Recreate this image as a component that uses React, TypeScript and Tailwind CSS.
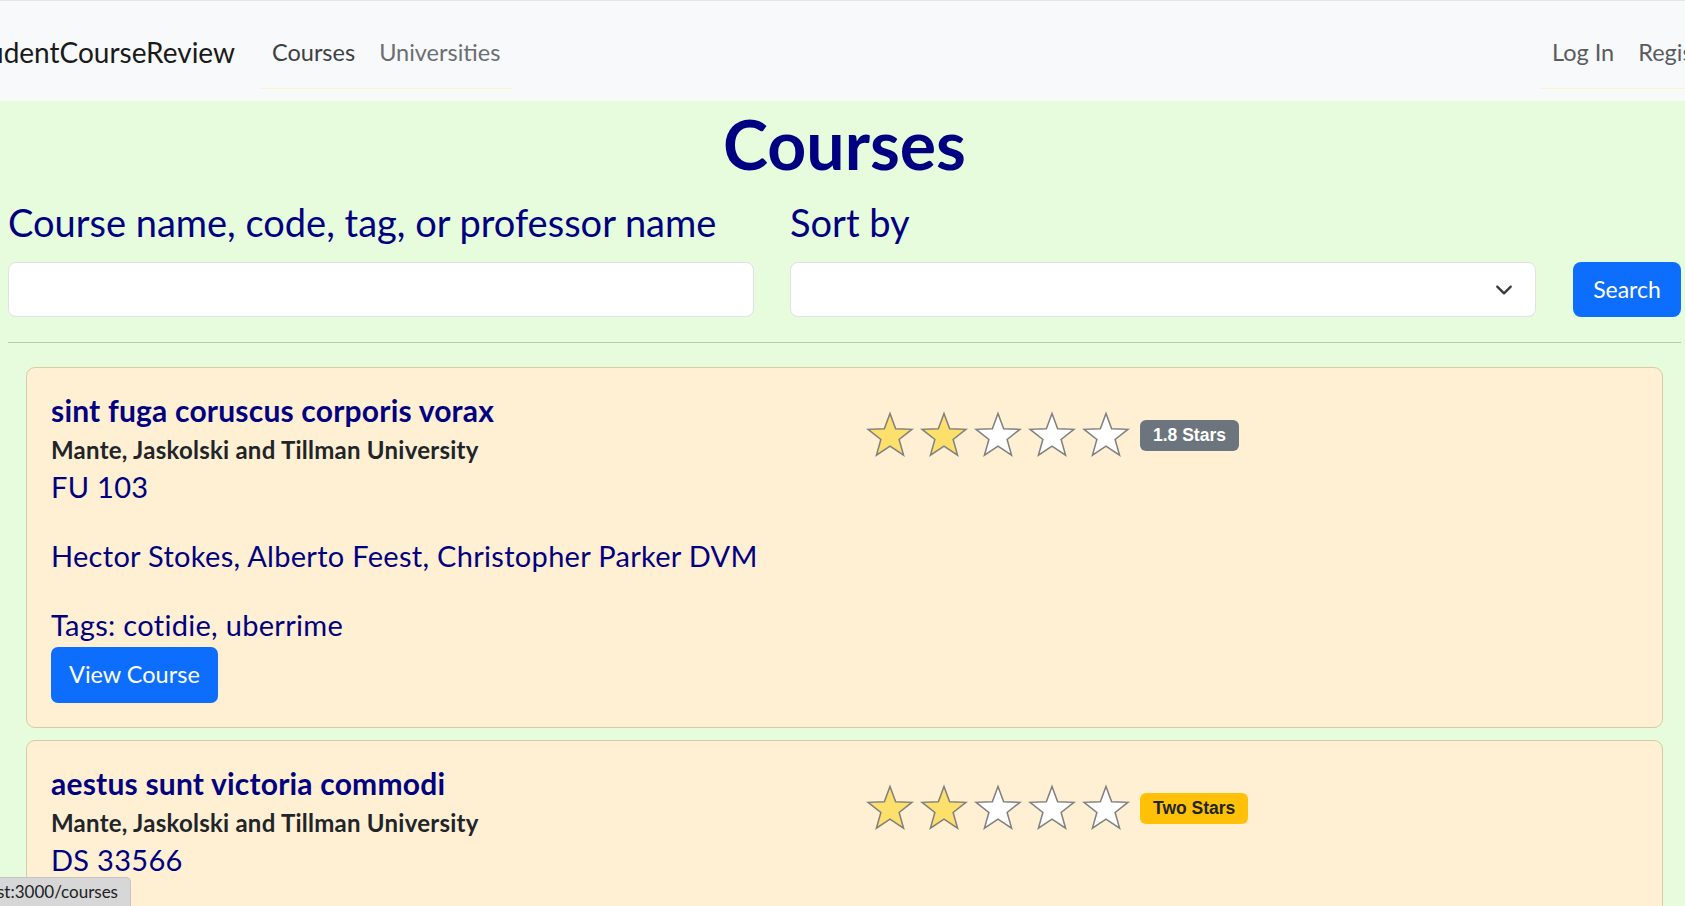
import React from "react";

type Course = {
  title: string;
  uni: string;
  code: string;
  profs: string;
  tags: string;
  filled: number;
  badge: string;
  badgeClass: string;
};

const courses: Course[] = [
  {
    title: "sint fuga coruscus corporis vorax",
    uni: "Mante, Jaskolski and Tillman University",
    code: "FU 103",
    profs: "Hector Stokes, Alberto Feest, Christopher Parker DVM",
    tags: "cotidie, uberrime",
    filled: 2,
    badge: "1.8 Stars",
    badgeClass: "bg-[#6c757d] text-white",
  },
  {
    title: "aestus sunt victoria commodi",
    uni: "Mante, Jaskolski and Tillman University",
    code: "DS 33566",
    profs: "Ms. Laura Kuhn, Wilbert Hessel",
    tags: "adeo, velut",
    filled: 2,
    badge: "Two Stars",
    badgeClass: "bg-[#ffc107] text-[#212529]",
  },
];

function Star({ filled }: { filled: boolean }) {
  return (
    <svg width="48" height="49" viewBox="0 0 50 50" className="shrink-0">
      <polygon
        points="25,2 30.88,17.91 47.83,18.58 34.51,29.09 39.11,45.42 25,36 10.89,45.42 15.49,29.09 2.17,18.58 19.12,17.91"
        fill={filled ? "#fde06b" : "#ffffff"}
        stroke="#808080"
        strokeWidth="1.6"
        strokeLinejoin="miter"
      />
    </svg>
  );
}

function CourseCard({ c }: { c: Course }) {
  return (
    <div className="mx-[18px] mb-[12px] rounded-[9px] border border-[#d8caa6] bg-[#fff0d4] px-[24px] pt-[26px] pb-[24px]">
      <div className="flex">
        {/* left side */}
        <div className="w-[815px] shrink-0">
          <div className="text-[30px] leading-[32px] font-bold tracking-[0.2px] text-[#000080]">{c.title}</div>
          <div className="pt-[2px] text-[24px] leading-[43px] font-bold tracking-[0.25px] text-[#212529]">{c.uni}</div>
          <div className="-mt-[1px] text-[29px] leading-[34px] tracking-[0.3px] text-[#000080]">{c.code}</div>
          <div className="mt-[35px] text-[29px] leading-[34px] tracking-[0.3px] text-[#000080]">{c.profs}</div>
          <div className="mt-[35px] text-[29px] leading-[34px] tracking-[0.3px] text-[#000080]">Tags: {c.tags}</div>
          <button className="mt-[5px] h-[56px] rounded-[7px] bg-[#0d6efd] px-[18px] text-[23.5px] text-white">
            View Course
          </button>
        </div>

        {/* rating */}
        <div className="mt-[17px] flex h-[49px] items-center">
          <div className="flex gap-[6px]">
            {[0, 1, 2, 3, 4].map((i) => (
              <Star key={i} filled={i < c.filled} />
            ))}
          </div>
          <span
            className={
              "ml-[10px] rounded-[6px] px-[13px] py-[5px] font-['Liberation_Sans',Arial,sans-serif] text-[17.5px] font-bold leading-[21px] " +
              c.badgeClass
            }
          >
            {c.badge}
          </span>
        </div>
      </div>
    </div>
  );
}

export default function App() {
  return (
    <div className="relative h-[906px] overflow-hidden bg-[#e6fcdc] font-['Lato',sans-serif]">
      {/* NAVBAR */}
      <nav className="flex h-[101px] items-start border-t border-[#e3e5e8] bg-[#f8f9fa]">
        <div className="mt-[31px] flex w-[235px] shrink-0 justify-end overflow-hidden whitespace-nowrap text-[28px] leading-[40px] text-[#1a1a1a]">
          StudentCourseReview
        </div>
        <ul className="ml-[25px] mt-[20px] flex h-[68px] items-center border-b border-[#fff3cd] pb-[4px] text-[23.5px]">
          <li className="px-[12px] text-[#3d4045]">Courses</li>
          <li className="px-[12px] text-[#6b6e71]">Universities</li>
        </ul>
        <ul className="ml-auto mt-[20px] flex h-[68px] w-[145px] shrink-0 items-center overflow-hidden whitespace-nowrap border-b border-[#fff3cd] pb-[4px] text-[23.5px] text-[#595c5f]">
          <li className="px-[12px]">Log In</li>
          <li className="px-[12px]">Register</li>
        </ul>
      </nav>

      {/* CONTENT */}
      <main className="pl-[8px] pr-[4px]">
        <h1 className="mt-[3px] text-center text-[68px] font-bold leading-[80px] text-[#000080]">Courses</h1>

        <div className="mt-[15px] flex items-end">
          <div className="w-[746px] shrink-0">
            <label className="block text-[38px] leading-[46px] text-[#000080]">
              Course name, code, tag, or professor name
            </label>
            <input className="mt-[17px] block h-[55px] w-full rounded-[8px] border border-[#dee2e6] bg-white px-4 outline-none" />
          </div>
          <div className="ml-[36px] w-[746px] shrink-0">
            <label className="block text-[38px] leading-[46px] text-[#000080]">Sort by</label>
            <div className="mt-[17px] flex h-[55px] items-center justify-end rounded-[8px] border border-[#dee2e6] bg-white pr-[22px]">
              <svg width="18" height="18" viewBox="0 0 16 16" fill="none">
                <path d="M2 5l6 6 6-6" stroke="#343a40" strokeWidth="2" strokeLinecap="round" strokeLinejoin="round" />
              </svg>
            </div>
          </div>
          <button className="ml-[37px] h-[55px] w-[108px] shrink-0 rounded-[8px] bg-[#0d6efd] text-[23px] text-white">
            Search
          </button>
        </div>

        <hr className="mt-[25px] mb-[24px] border-t border-[#b8c9ae]" />

        {courses.map((c) => (
          <CourseCard key={c.code} c={c} />
        ))}
      </main>

      {/* status bar */}
      <div className="absolute bottom-0 left-0 flex h-[29px] w-[131px] items-center justify-end overflow-hidden whitespace-nowrap rounded-tr-[5px] border-t border-r border-[#c4c4c4] bg-[#d7d7d7] pr-[12px] text-[17px] text-[#202124]">
        localhost:3000/courses
      </div>
    </div>
  );
}
